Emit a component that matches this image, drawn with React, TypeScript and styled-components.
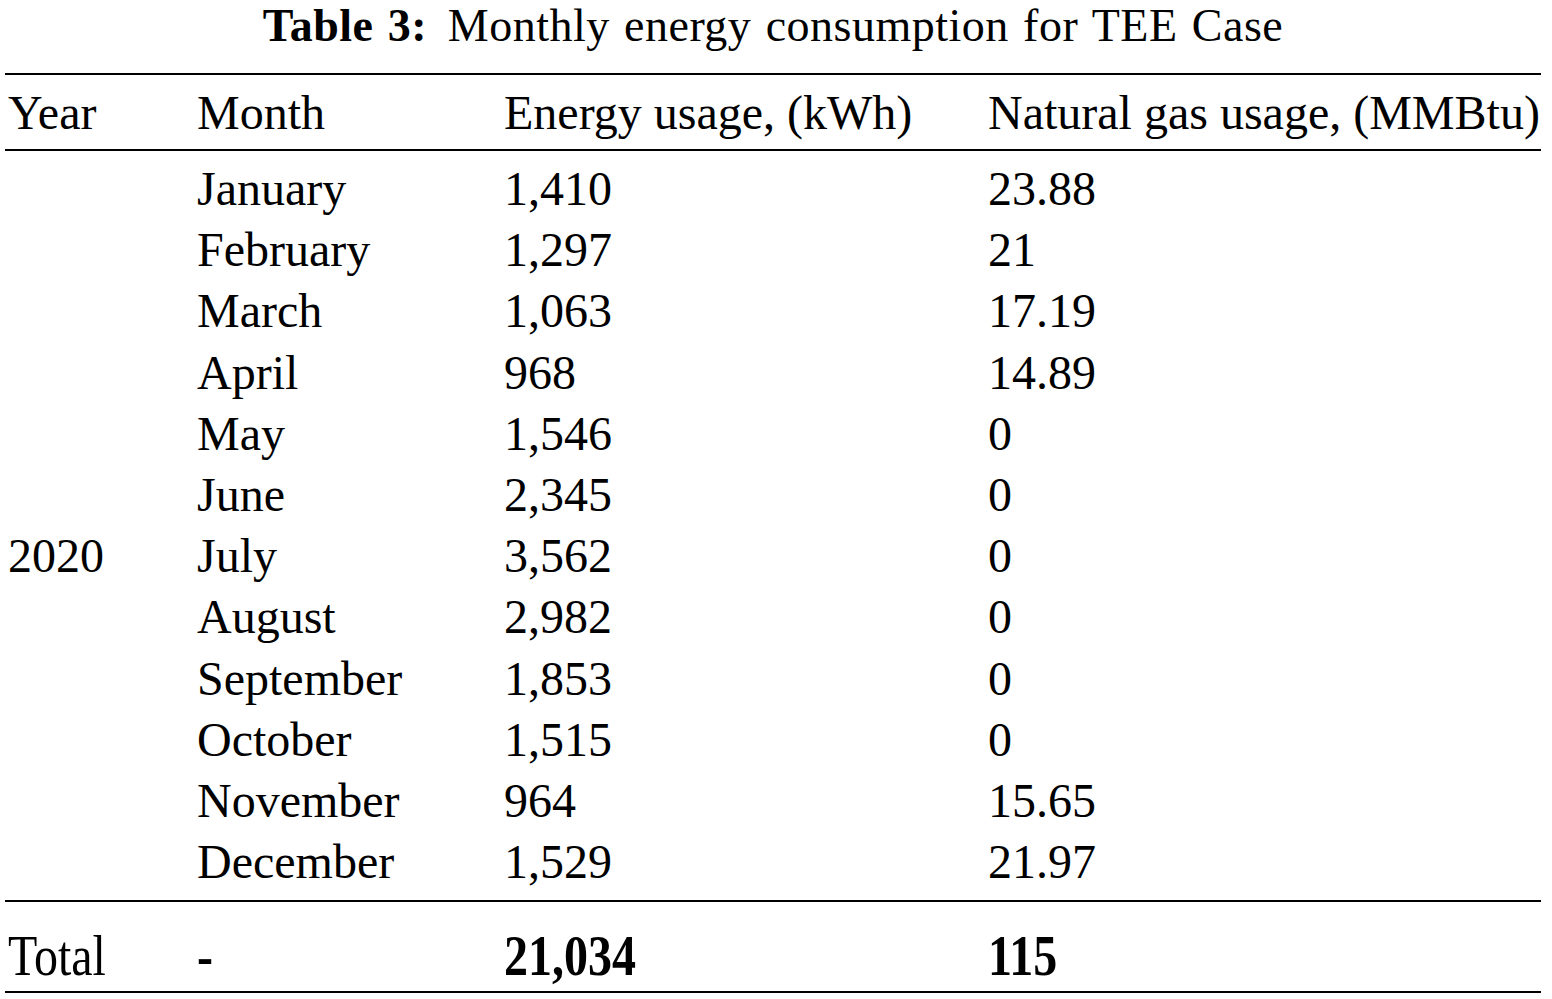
import styled, { createGlobalStyle } from "styled-components";

const GlobalStyle = createGlobalStyle`
  html, body {
    margin: 0;
    padding: 0;
    background: #fff;
  }
  body {
    font-family: "Liberation Serif", "Times New Roman", serif;
    color: #000;
  }
`;

const Page = styled.div`
  width: 1536px;
  padding-left: 5px;
  font-size: 48px;
`;

const Caption = styled.div`
  font-size: 46px;
  line-height: 51px;
  letter-spacing: 0.5px;
  word-spacing: 0.05em;
  text-align: center;
  white-space: nowrap;
  margin-bottom: 22px;
`;

const CaptionLabel = styled.b`
  margin-right: 0.45em;
`;

const Rule = styled.div`
  height: 2px;
  background: #000;
`;

const Row = styled.div<{ $height: number }>`
  display: grid;
  grid-template-columns: 189px 307px 484px 1fr;
  height: ${({ $height }) => $height}px;
  align-items: center;
  line-height: 53px;
  white-space: nowrap;
`;

const Cell = styled.div`
  padding-left: 3px;
`;

const Body = styled.div`
  padding: 7px 0 8px;
`;

const TotalRow = styled.div`
  display: grid;
  grid-template-columns: 189px 307px 484px 1fr;
  height: 89px;
  padding-top: 30px;
  box-sizing: border-box;
  line-height: 53px;
  white-space: nowrap;
`;

// the total row is drawn a little taller than the rest in the source
const Stretched = styled.span<{ $bold?: boolean }>`
  display: inline-block;
  padding-left: 3px;
  font-weight: ${({ $bold }) => ($bold ? 700 : 400)};
  transform: scaleY(1.18);
  transform-origin: 50% 43px;
`;

const months = [
  ["January", "1,410", "23.88"],
  ["February", "1,297", "21"],
  ["March", "1,063", "17.19"],
  ["April", "968", "14.89"],
  ["May", "1,546", "0"],
  ["June", "2,345", "0"],
  ["July", "3,562", "0"],
  ["August", "2,982", "0"],
  ["September", "1,853", "0"],
  ["October", "1,515", "0"],
  ["November", "964", "15.65"],
  ["December", "1,529", "21.97"],
];

export default function App() {
  return (
    <>
      <GlobalStyle />
      <Page>
        <Caption>
          <CaptionLabel>Table 3:</CaptionLabel>
          Monthly energy consumption for TEE Case
        </Caption>
        <Rule />
        <Row $height={74}>
          <Cell>Year</Cell>
          <Cell>Month</Cell>
          <Cell>Energy usage, (kWh)</Cell>
          <Cell>Natural gas usage, (MMBtu)</Cell>
        </Row>
        <Rule />
        <Body>
          {months.map(([month, kwh, gas]) => (
            <Row key={month} $height={61.2}>
              <Cell>{month === "July" ? "2020" : ""}</Cell>
              <Cell>{month}</Cell>
              <Cell>{kwh}</Cell>
              <Cell>{gas}</Cell>
            </Row>
          ))}
        </Body>
        <Rule />
        <TotalRow>
          <div><Stretched>Total</Stretched></div>
          <div><Stretched $bold>-</Stretched></div>
          <div><Stretched $bold>21,034</Stretched></div>
          <div><Stretched $bold>115</Stretched></div>
        </TotalRow>
        <Rule />
      </Page>
    </>
  );
}
